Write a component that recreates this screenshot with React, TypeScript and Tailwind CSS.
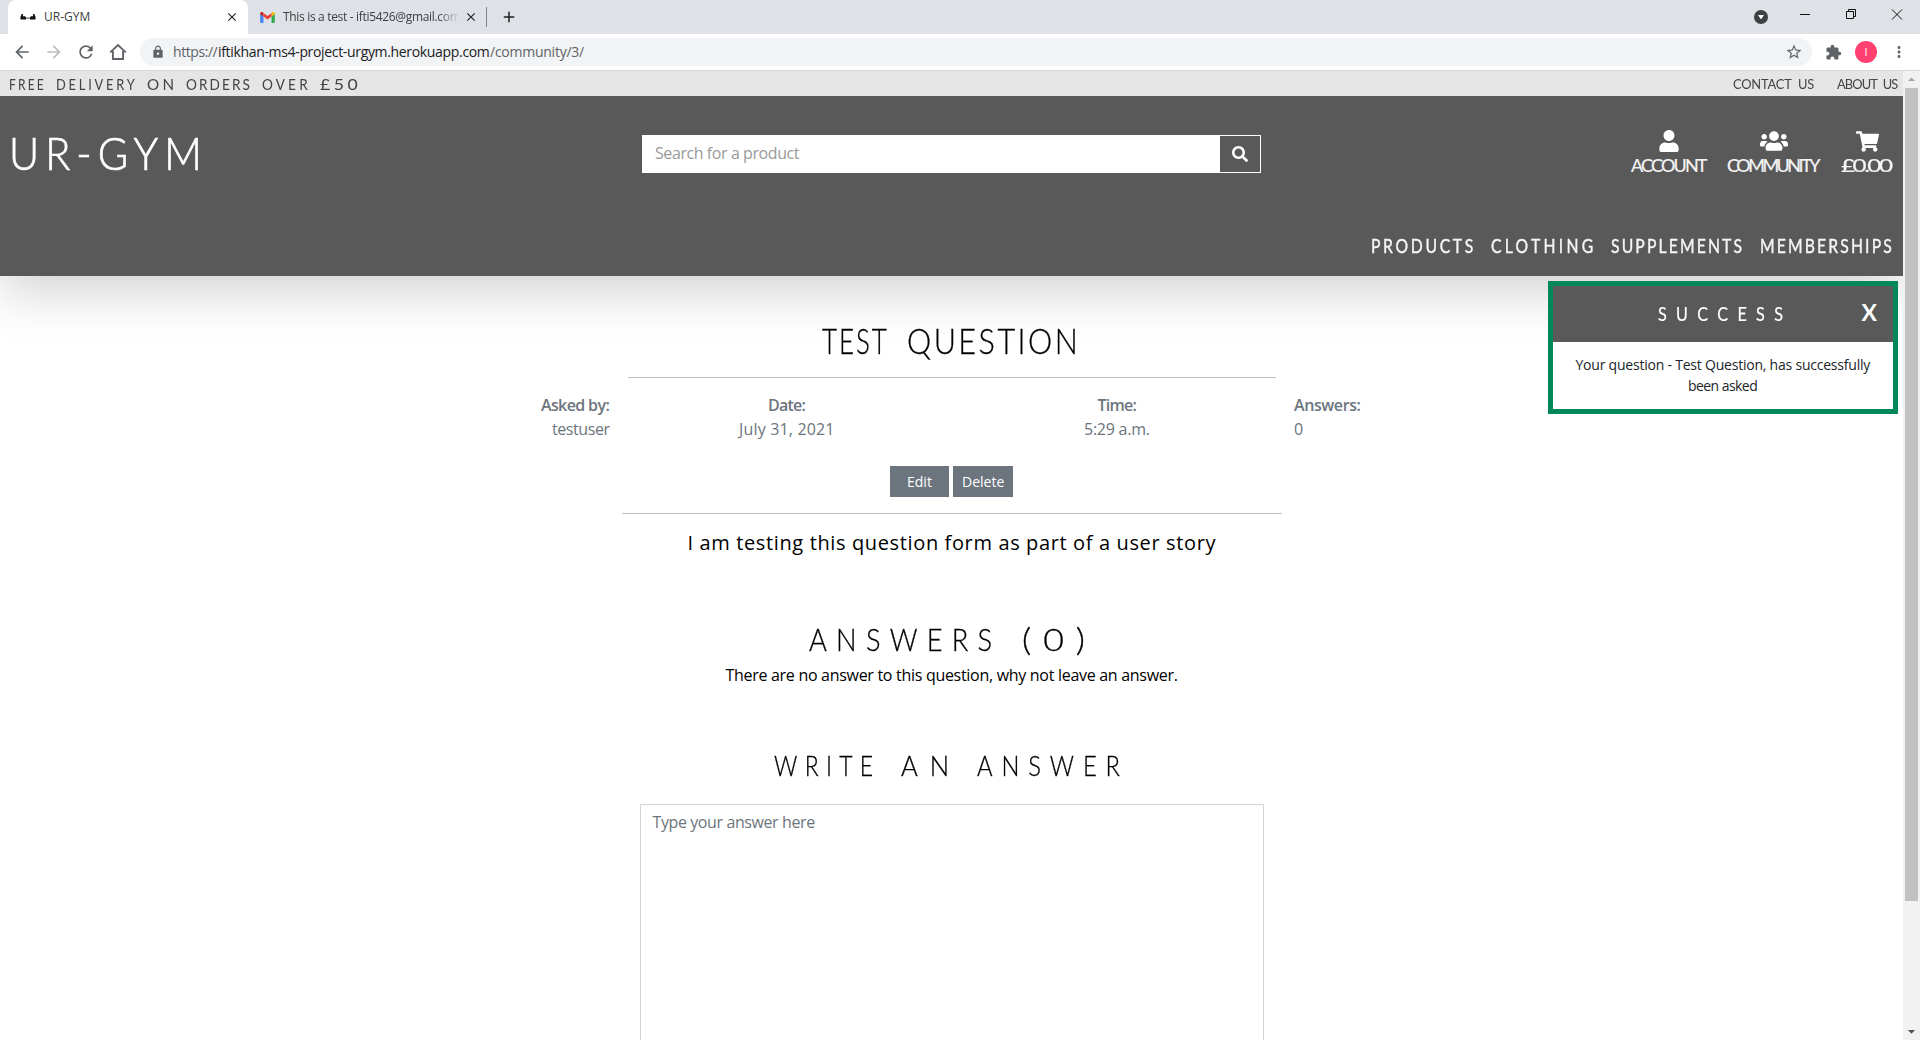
import React, { useLayoutEffect, useRef, useState } from 'react';
import { FaUser, FaUsers, FaShoppingCart, FaSearch } from 'react-icons/fa';
import { MdArrowBack, MdArrowForward, MdRefresh, MdLock, MdStarBorder, MdExtension, MdMoreVert, MdClose, MdAdd, MdArrowDropDown, MdArrowDropUp } from 'react-icons/md';

/** One line of text tracked out so that it spans `width` pixels; `squeeze` scales the letters horizontally. */
function Tracked({ width, children, className = '', squeeze = 1 }: { width: number; children: string; className?: string; squeeze?: number }) {
  const ref = useRef<HTMLSpanElement>(null);
  const [spacing, setSpacing] = useState(0);
  useLayoutEffect(() => {
    const el = ref.current;
    if (!el) return;
    el.style.letterSpacing = '0px';
    const natural = el.offsetWidth;
    const next = (width / squeeze - natural) / Math.max(1, children.length - 1);
    el.style.letterSpacing = `${next}px`;
    setSpacing(next);
  }, [width, children, squeeze]);
  return (
    <span className={`block whitespace-pre ${className}`} style={{ width }}>
      <span
        ref={ref}
        className="inline-block origin-left"
        style={{ letterSpacing: spacing, transform: squeeze === 1 ? undefined : `scaleX(${squeeze})` }}
      >
        {children}
      </span>
    </span>
  );
}

function GmailIcon() {
  return (
    <svg viewBox="0 0 16 12" className="h-[11px] w-[15px] shrink-0">
      <path d="M0 2v9a1 1 0 0 0 1 1h2.600V4.700z" fill="#4285f4" />
      <path d="M16 2v9a1 1 0 0 1-1 1h-2.600V4.700z" fill="#34a853" />
      <path d="M12.400 1.200V4.900L16 2.200V1.600C16 .1 14.300-.5 13.200.4z" fill="#fbbc04" />
      <path d="M3.600 5V1.100L8 4.400l4.400-3.300V5L8 8.300z" fill="#ea4335" />
      <path d="M0 1.600v.6L3.600 5V1.100L2.800.4C1.700-.5 0 .1 0 1.600z" fill="#c5221f" />
    </svg>
  );
}

function ArmsIcon() {
  return (
    <svg viewBox="0 0 16 6" className="h-1.5 w-4 shrink-0" fill="#111">
      <path d="M1.800 0h1.400l-.4 1.600.6 1C4.500 1.900 5.600 2.600 6 3.600V5.500H.8C-.2 4.500.6 1.500 1.800 0z" />
      <path d="M14.200 0h-1.400l.4 1.600-.6 1C11.500 1.900 10.400 2.600 10 3.600V5.500h5.200c1-1 .2-4-1-5.500z" />
      <path d="M6 3.300h4v1.700H6z" opacity=".45" />
    </svg>
  );
}

function HomeIcon() {
  return (
    <svg viewBox="0 0 20 20" className="ml-3 size-[20px]" fill="none" stroke="currentColor" strokeWidth="1.900">
      <path d="M2.200 10.400L10 3l7.800 7.400M4.900 9v8h10.200V9" />
    </svg>
  );
}

function BrowserChrome() {
  return (
    <div className="font-['Open_Sans',sans-serif]">
      <div className="flex h-[34px] bg-[#dee1e6] pl-2 text-[12px] text-[#3c4043]">
        <div className="flex h-full w-[240px] items-center rounded-t-lg bg-white pl-3 pr-[9px]">
          <ArmsIcon />
          <Tracked width={46} className="ml-2">UR-GYM</Tracked>
          <MdClose className="ml-auto size-[14px] text-[#202124]" />
        </div>
        <div className="flex h-full w-[238px] items-center pl-3 pr-2">
          <GmailIcon />
          <div className="ml-2 w-[180px] [mask-image:linear-gradient(to_right,black_86%,transparent_98%)]">
            <Tracked width={178}>{'This is a test - ifti5426@gmail.com'}</Tracked>
          </div>
          <MdClose className="ml-auto size-[14px] text-[#202124]" />
        </div>
        <div className="mt-[7px] h-5 w-px bg-[#80868b]" />
        <MdAdd className="ml-[13px] mt-2 size-[18px] text-[#202124]" />
        <div className="ml-auto flex h-full">
          <div className="mr-[30px] mt-[10px] flex size-[14px] items-center justify-center rounded-full bg-[#3c4043]">
            <svg viewBox="0 0 8 6" className="w-[6px]" fill="#fff"><path d="M0 0h8L4 6z" /></svg>
          </div>
          <svg viewBox="0 0 122 30" className="h-[30px] w-[122px]" fill="none" stroke="#111">
            <path d="M2 14.500h10" />
            <path d="M48.500 11.500h7v7h-7zM50.500 11.500v-2h7v7h-2" />
            <path d="M94 9.500l10 10M104 9.500l-10 10" />
          </svg>
        </div>
      </div>
      <div className="flex h-9 items-center bg-white text-[#5f6368]">
        <MdArrowBack className="ml-3 size-[20px]" />
        <MdArrowForward className="ml-3 size-[20px] text-[#babcbe]" />
        <MdRefresh className="ml-3 size-[20px]" />
        <HomeIcon />
        <div className="ml-3 flex h-7 w-[1672px] items-center rounded-full bg-[#f1f3f4] pl-[11px] pr-[9px] text-[14px]">
          <MdLock className="size-[14px]" />
          <div className="-mt-px ml-2 flex">
            <Tracked width={45}>https://</Tracked>
            <Tracked width={272} className="text-[#202124]">iftikhan-ms4-project-urgym.herokuapp.com</Tracked>
            <Tracked width={94}>/community/3/</Tracked>
          </div>
          <MdStarBorder className="ml-auto size-[18px]" />
        </div>
        <MdExtension className="ml-[13px] size-[17px]" />
        <div className="ml-[13px] flex size-[22px] items-center justify-center rounded-full bg-[#ff4071] text-[11px] text-white">I</div>
        <MdMoreVert className="ml-[13px] size-[18px]" />
      </div>
      <div className="h-px bg-[#d8d8d8]" />
    </div>
  );
}

function HeaderLink({ icon, label, width, squeeze }: { icon: React.ReactNode; label: string; width: number; squeeze?: number }) {
  return (
    <div className="flex flex-col items-center">
      <div className="flex h-[22px] items-center">{icon}</div>
      <Tracked width={width} squeeze={squeeze} className="text-[18px] leading-[26px] [-webkit-text-stroke:0.2px_#f5f5f5]">{label}</Tracked>
    </div>
  );
}

function Header() {
  return (
    <header className="font-['Lato',sans-serif] text-[#f5f5f5] shadow-[0_16px_48px_rgba(0,0,0,0.176)]">
      <div className="flex h-[25px] items-center justify-between bg-[#e5e5e5] pl-[9px] pr-[5px] text-[#444]">
        <div className="flex gap-3 pt-px text-[16px] leading-5">
          <Tracked width={35} squeeze={0.75}>FREE</Tracked>
          <Tracked width={79} squeeze={0.8}>DELIVERY</Tracked>
          <Tracked width={27} squeeze={0.95}>ON</Tracked>
          <Tracked width={64} squeeze={0.85}>ORDERS</Tracked>
          <Tracked width={46} squeeze={0.85}>OVER</Tracked>
          <Tracked width={38} squeeze={1.1}>£50</Tracked>
        </div>
        <div className="flex gap-[23px] text-[14px]">
          <Tracked width={81} squeeze={0.92} className="[word-spacing:4px]">CONTACT US</Tracked>
          <Tracked width={61} squeeze={0.92} className="[word-spacing:4px]">ABOUT US</Tracked>
        </div>
      </div>
      <div className="h-[180px] bg-[#595959]">
        <div className="flex h-[120px] justify-between pl-[9px] pr-[10px]">
          <Tracked width={193} squeeze={0.92} className="mt-[30px] text-[45px] font-light leading-[54px] text-white [-webkit-text-stroke:0.7px_white]">UR-GYM</Tracked>
          <div className="ml-[440px] mt-[39px] flex h-[38px] w-[619px] border border-white bg-white font-['Open_Sans',sans-serif]">
            <div className="flex flex-1 items-center pb-0.5 pl-3 text-[16px] text-[#999]"><Tracked width={145}>Search for a product</Tracked></div>
            <div className="flex w-10 items-center justify-center bg-[#595959]"><FaSearch className="size-4 text-white" /></div>
          </div>
          <div className="ml-auto mt-[34px] flex gap-5">
            <HeaderLink icon={<FaUser className="size-[22px] text-white" />} label="ACCOUNT" width={76} />
            <HeaderLink icon={<FaUsers className="size-[28px] text-white" />} label="COMMUNITY" width={94} />
            <HeaderLink icon={<FaShoppingCart className="size-[23px] text-white" />} label="£0.00" width={52} squeeze={1.35} />
          </div>
        </div>
        <nav className="flex justify-end gap-[18px] pr-[11px] pt-[18px] text-[18.500px] leading-6 [-webkit-text-stroke:0.4px_#f5f5f5]">
          <Tracked width={102} squeeze={0.85}>PRODUCTS</Tracked>
          <Tracked width={102} squeeze={0.85}>CLOTHING</Tracked>
          <Tracked width={131} squeeze={0.85}>SUPPLEMENTS</Tracked>
          <Tracked width={132} squeeze={0.85}>MEMBERSHIPS</Tracked>
        </nav>
      </div>
    </header>
  );
}

function Toast() {
  return (
    <div className="absolute right-[5px] top-[210px] h-[133px] w-[350px] border-[5px] border-[#00875a] bg-white font-['Open_Sans',sans-serif]">
      <div className="flex h-14 items-center bg-[#595959] pl-[105px] pr-4 text-white font-['Lato',sans-serif]">
        <Tracked width={125} squeeze={0.85} className="text-[19px] [-webkit-text-stroke:0.2px_white]">SUCCESS</Tracked>
        <span className="ml-auto -mt-1 text-[23px] font-bold leading-none">X</span>
      </div>
      <div className="flex flex-col items-center pt-3 text-[14px] leading-[21px] text-[#212529]">
        <Tracked width={295}>Your question - Test Question, has successfully</Tracked>
        <Tracked width={70}>been asked</Tracked>
      </div>
    </div>
  );
}

function Question() {
  return (
    <main className="flex flex-col items-center font-['Open_Sans',sans-serif] text-black">
      <div className="mr-[3px] mt-[42px] flex gap-5 text-[36px] font-light leading-[44px] [-webkit-text-stroke:0.3px_black] font-['Lato',sans-serif]">
        <Tracked width={65} squeeze={0.72}>TEST</Tracked>
        <Tracked width={171} squeeze={0.85}>QUESTION</Tracked>
      </div>
      <div className="mt-[15px] h-px w-[648px] bg-[#bfbfbf]" />
      <div className="mt-[15px] flex h-12 text-[16px] leading-6 text-[#6c757d]">
        <div className="flex w-[68px] flex-col items-end">
          <Tracked width={69} className="font-semibold">Asked by:</Tracked>
          <Tracked width={58}>testuser</Tracked>
        </div>
        <div className="ml-[129px] flex w-[96px] flex-col items-center">
          <Tracked width={38} className="font-semibold">Date:</Tracked>
          <Tracked width={96}>July 31, 2021</Tracked>
        </div>
        <div className="ml-[249px] flex w-[66px] flex-col items-center">
          <Tracked width={39} className="font-semibold">Time:</Tracked>
          <Tracked width={66}>5:29 a.m.</Tracked>
        </div>
        <div className="ml-[144px] flex w-[67px] flex-col items-start">
          <Tracked width={67} className="font-semibold">Answers:</Tracked>
          <Tracked width={9}>0</Tracked>
        </div>
      </div>
      <div className="mt-[25px] flex gap-1 text-[14px] text-white">
        <div className="flex h-[31px] w-[59px] items-center justify-center bg-[#6c757d] pb-px"><Tracked width={25}>Edit</Tracked></div>
        <div className="flex h-[31px] w-[60px] items-center justify-center bg-[#6c757d] pb-px"><Tracked width={42}>Delete</Tracked></div>
      </div>
      <div className="mt-4 h-px w-[660px] bg-[#bfbfbf]" />
      <Tracked width={528} className="mt-[14px] text-[20px] leading-[30px]">I am testing this question form as part of a user story</Tracked>
      <div className="mr-[9px] mt-[61px] flex gap-[30px] text-[31px] font-light leading-[40px] [-webkit-text-stroke:0.3px_black] font-['Lato',sans-serif]">
        <Tracked width={183} squeeze={0.88}>ANSWERS</Tracked>
        <Tracked width={63} squeeze={1.15}>(0)</Tracked>
      </div>
      <Tracked width={452} className="mt-[4px] text-[16px] leading-6">There are no answer to this question, why not leave an answer.</Tracked>
      <div className="mr-[9px] mt-[61px] flex gap-[28px] text-[27px] font-light leading-[36px] [-webkit-text-stroke:0.3px_black] font-['Lato',sans-serif]">
        <Tracked width={99} squeeze={0.85}>WRITE</Tracked>
        <Tracked width={48} squeeze={0.95}>AN</Tracked>
        <Tracked width={143} squeeze={0.88}>ANSWER</Tracked>
      </div>
      <div className="mt-[20px] h-[260px] w-[624px] border border-[#ced4da] pl-3 pt-[5px] text-[16px] leading-6 text-[#6c757d]">
        <Tracked width={163}>Type your answer here</Tracked>
      </div>
    </main>
  );
}

function Scrollbar() {
  return (
    <div className="flex w-[17px] flex-col items-center bg-[#f1f1f1]">
      <MdArrowDropUp className="size-[17px] shrink-0 text-[#a3a3a3]" />
      <div className="h-[813px] w-[13px] shrink-0 bg-[#c1c1c1]" />
      <MdArrowDropDown className="mt-auto size-[17px] shrink-0 text-[#505050]" />
    </div>
  );
}

export default function App() {
  return (
    <div className="flex h-[1040px] w-[1920px] flex-col overflow-hidden bg-white">
      <BrowserChrome />
      <div className="flex min-h-0 flex-1">
        <div className="relative w-[1903px] overflow-hidden">
          <Header />
          <Question />
          <Toast />
        </div>
        <Scrollbar />
      </div>
    </div>
  );
}
